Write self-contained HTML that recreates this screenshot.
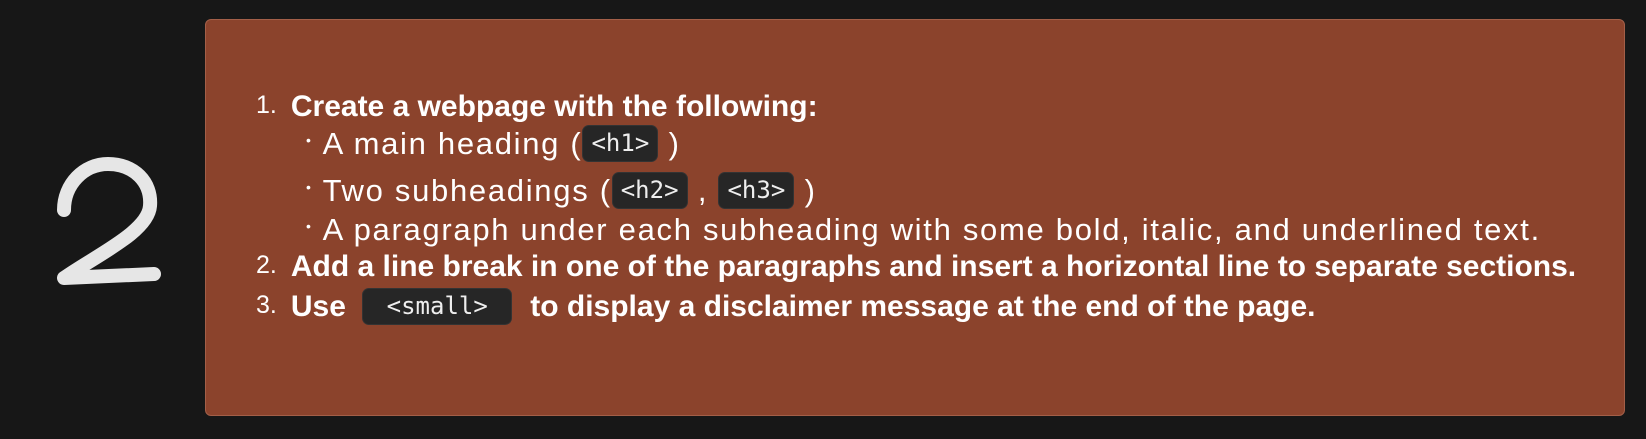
<!DOCTYPE html>
<html><head><meta charset="utf-8"><style>
html,body{margin:0;padding:0;background:#171717;width:1646px;height:439px;overflow:hidden}
.box{position:absolute;left:205px;top:19px;width:1420px;height:397px;background:#8b432c;border:1px solid #a35f48;border-radius:6px;box-sizing:border-box}
.l{position:absolute;white-space:nowrap;color:#fff;font-family:"Liberation Sans",Arial,sans-serif;font-size:31px;line-height:40px;letter-spacing:1.7px}
.b{font-weight:bold;letter-spacing:0;font-size:30px}
.n{font-weight:normal;font-size:25px;letter-spacing:0;position:relative;top:-3px;margin-right:14px}
.d{font-size:14px;position:relative;top:-9px;margin-right:10px}
code{display:inline-block;box-sizing:border-box;text-align:center;background:#262626;border:1px solid #333;border-radius:7px;font-family:"DejaVu Sans Mono","Liberation Mono",monospace;font-size:24px;letter-spacing:0;line-height:35px;padding:0 8px;color:#eee;vertical-align:middle;position:relative;top:-2px;font-weight:normal}
</style></head><body>
<svg width="200" height="439" style="position:absolute;left:0;top:0"><path d="M64 210 C64 184 84 164 108 164 C134 164 152 182 150 206 C148 232 95 256 64 278 L154 274" fill="none" stroke="#e6e6e6" stroke-width="14" stroke-linecap="round" stroke-linejoin="round"/></svg>
<div class="box"></div>
<div class="l b" style="left:256px;top:87px"><span class="n">1.</span>Create a webpage with the following:</div>
<div class="l" style="left:306px;top:124px"><span class="d">•</span>A main heading (<code>&lt;h1&gt;</code> )</div>
<div class="l" style="left:306px;top:171px"><span class="d">•</span>Two subheadings (<code>&lt;h2&gt;</code> , <code>&lt;h3&gt;</code> )</div>
<div class="l" style="left:306px;top:210px"><span class="d">•</span>A paragraph under each subheading with some bold, italic, and underlined text.</div>
<div class="l b" style="left:256px;top:247px"><span class="n">2.</span>Add a line break in one of the paragraphs and insert a horizontal line to separate sections.</div>
<div class="l b" style="left:256px;top:287px"><span class="n">3.</span>Use <code style="width:150px;margin:0 18px 0 8px">&lt;small&gt;</code>to display a disclaimer message at the end of the page.</div>
</body></html>
